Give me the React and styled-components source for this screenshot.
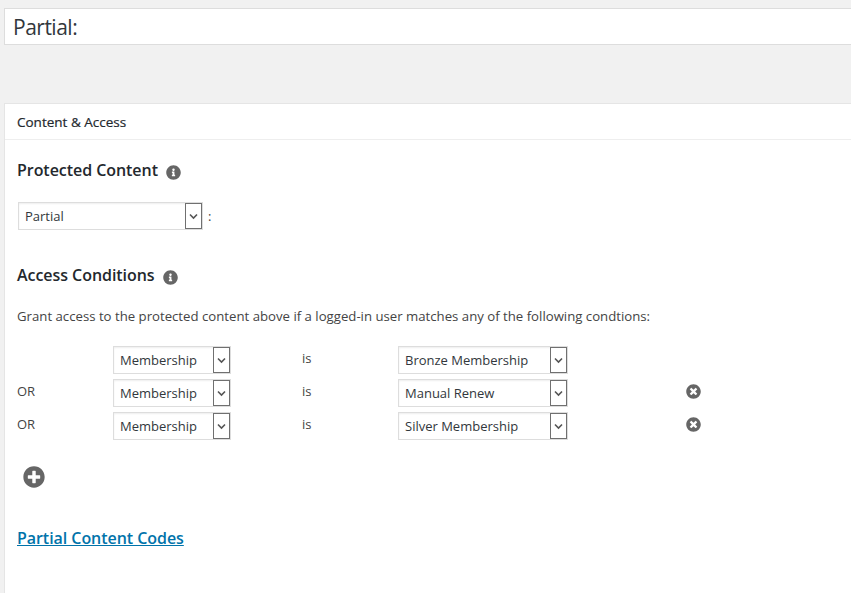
import React from "react";
import styled, {createGlobalStyle} from "styled-components";
import {FaInfoCircle, FaPlusCircle, FaTimesCircle} from "react-icons/fa";

const GlobalStyle = createGlobalStyle`
  html, body {
    margin: 0;
    padding: 0;
    height: 100%;
    overflow: hidden;
    background: #f1f1f1;
    font-family: "Open Sans", "Noto Sans", sans-serif;
    color: #444;
  }
`;

const Page = styled.div`
  width: 851px;
  height: 593px;
  overflow: hidden;
  padding: 8px 0 0 4px;
  box-sizing: border-box;
`;

const TitleBox = styled.div`
  width: 900px;
  height: 37px;
  box-sizing: border-box;
  border: 1px solid #ddd;
  background: #fff;
  padding: 0 8px;
  font-size: 21px;
  line-height: 37px;
  color: #32373c;
  letter-spacing: -0.5px;
`;

const Panel = styled.section`
  width: 900px;
  height: 520px;
  margin-top: 58px;
  box-sizing: border-box;
  border: 1px solid #e5e5e5;
  background: #fff;
`;

const PanelHeader = styled.h2`
  margin: 0;
  height: 36px;
  box-sizing: border-box;
  padding: 0 12px;
  border-bottom: 1px solid #eee;
  font-size: 13.5px;
  font-weight: 400;
  line-height: 36px;
  color: #23282d;
  -webkit-text-stroke: 0.2px #23282d;
`;

const PanelBody = styled.div`
  padding: 0 12px;
`;

const Heading = styled.h3`
  display: flex;
  align-items: center;
  gap: 8px;
  margin: ${({$top}) => $top}px 0 0;
  height: 24px;
  font-size: 16px;
  font-weight: 600;
  line-height: 24px;
  color: #23282d;
  letter-spacing: -0.05px;
`;

const InfoIcon = styled(FaInfoCircle)`
  width: 15px;
  height: 15px;
  color: #666;
  margin-top: 5px;
`;

const SelectRow = styled.div`
  display: flex;
  align-items: center;
  gap: 5px;
  margin: 20px 0 0 1px;
  font-size: 13px;
  color: #444;
`;

const Select = styled.div`
  display: flex;
  justify-content: space-between;
  width: ${({$width}) => $width}px;
  height: 28px;
  box-sizing: border-box;
  border: 1px solid #ddd;
  box-shadow: inset 0 1px 2px rgba(0, 0, 0, 0.07);
  background: #fff;
  padding-left: 6px;
  font-size: 13px;
  line-height: 26px;
  color: #32373c;
`;

const Arrow = styled.span`
  display: flex;
  align-items: center;
  justify-content: center;
  width: 17px;
  height: 26px;
  box-sizing: border-box;
  border: 1px solid #707070;
  background: #fff;
  flex: none;
`;

const Chevron = () => (
  <svg width="9" height="7" viewBox="0 0 9 7">
    <path d="M1 1.5 L4.5 5 L8 1.5" fill="none" stroke="#555" strokeWidth="1.6" />
  </svg>
);

const Dropdown = ({value, width}) => (
  <Select $width={width}>
    {value}
    <Arrow>
      <Chevron />
    </Arrow>
  </Select>
);

const Description = styled.p`
  margin: 19px 0 0;
  font-size: 13.2px;
  line-height: 20px;
  color: #444;
`;

const Conditions = styled.div`
  display: grid;
  grid-template-columns: 96px 118px 71px 96px 170px 118px 15px;
  grid-auto-rows: 28px;
  row-gap: 5px;
  margin-top: 20px;
  align-items: center;
  font-size: 13px;
  color: #444;
`;

const Cell = styled.span`
  grid-column: ${({$col}) => $col};
  margin-top: -4px;
`;

const RemoveIcon = styled(FaTimesCircle)`
  grid-column: 7;
  width: 15px;
  height: 15px;
  color: #666;
  margin-top: -3px;
`;

const AddIcon = styled(FaPlusCircle)`
  display: block;
  width: 22px;
  height: 22px;
  color: #666;
  margin: 26px 0 0 6px;
`;

const CodesLink = styled.a`
  display: block;
  margin-top: 38px;
  font-size: 16px;
  font-weight: 600;
  line-height: 24px;
  color: #0073aa;
  text-decoration: underline;
  letter-spacing: -0.05px;
`;

const rows = [
  {prefix: "", level: "Bronze Membership", removable: false},
  {prefix: "OR", level: "Manual Renew", removable: true},
  {prefix: "OR", level: "Silver Membership", removable: true},
];

export default function App() {
  return (
    <Page>
      <GlobalStyle />
      <TitleBox>Partial:</TitleBox>
      <Panel>
        <PanelHeader>Content &amp; Access</PanelHeader>
        <PanelBody>
          <Heading $top={18}>
            Protected Content <InfoIcon />
          </Heading>
          <SelectRow>
            <Dropdown value="Partial" width={185} />
            <span>:</span>
          </SelectRow>
          <Heading $top={33}>
            Access Conditions <InfoIcon />
          </Heading>
          <Description>
            Grant access to the protected content above if a logged-in user matches any of the following condtions:
          </Description>
          <Conditions>
            {rows.map(row => (
              <React.Fragment key={row.level}>
                <Cell $col={1}>{row.prefix}</Cell>
                <Dropdown value="Membership" width={118} />
                <Cell $col={4}>is</Cell>
                <Dropdown value={row.level} width={170} />
                {row.removable && <RemoveIcon />}
              </React.Fragment>
            ))}
          </Conditions>
          <AddIcon />
          <CodesLink href="#">Partial Content Codes</CodesLink>
        </PanelBody>
      </Panel>
    </Page>
  );
}
